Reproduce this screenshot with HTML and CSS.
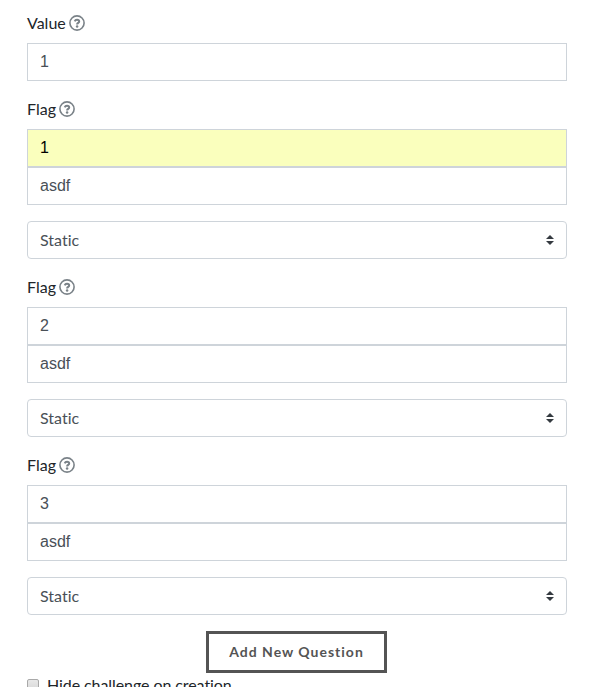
FILE: index.html
```html
<!DOCTYPE html>
<html lang="en"><head><meta charset="utf-8"><title>Challenge</title><link rel="stylesheet" href="styles.css"></head>
<body>
<svg class="defs"><symbol id="help" viewBox="0 0 16 16"><circle cx="8" cy="8" r="7.100" fill="none" stroke="currentColor" stroke-width="1.600"/><path d="M5.700 6.300C6.100 5.200 6.900 4.700 8 4.700c1.300 0 2.200.700 2.200 1.700 0 1.500-2.100 1.400-2.100 3" fill="none" stroke="currentColor" stroke-width="2"/><circle cx="8.100" cy="11.500" r="1.250" fill="currentColor"/></symbol>
<symbol id="caret" viewBox="0 0 8 10"><path d="M4 0L8 4H0zM0 6h8L4 10z" fill="currentColor"/></symbol></svg>
<form class="form">
<div class="group"><label class="label">Value <svg class="help"><use href="#help"/></svg></label><div class="field arial">1</div></div>
<div class="group"><label class="label">Flag <svg class="help"><use href="#help"/></svg></label><div class="field arial filled">1</div><div class="field arial">asdf</div></div>
<div class="select">Static<svg class="caret"><use href="#caret"/></svg></div>
<div class="group"><label class="label">Flag <svg class="help"><use href="#help"/></svg></label><div class="field arial">2</div><div class="field arial">asdf</div></div>
<div class="select">Static<svg class="caret"><use href="#caret"/></svg></div>
<div class="group"><label class="label">Flag <svg class="help"><use href="#help"/></svg></label><div class="field arial">3</div><div class="field arial">asdf</div></div>
<div class="select">Static<svg class="caret"><use href="#caret"/></svg></div>
<button type="button" class="add">Add New Question</button>
<label class="check"><span class="box"></span><span class="check-text">Hide challenge on creation</span></label>
</form>
</body></html>
```
FILE: styles.css
```css
* { box-sizing: border-box; }
body { margin: 0; height: 687px; overflow: hidden; background: #fff; color: #212529; font: 16px/24px Lato, sans-serif; font-variant-ligatures: none; }
.defs { display: none; }
.form { padding: 11px 23px 0 27px; display: flex; flex-direction: column; }
.group { margin-bottom: 16px; }
.label { display: flex; align-items: center; gap: 3px; height: 24px; margin-bottom: 8px; }
.help { width: 16px; height: 16px; color: #7a8288; }
.field, .select { height: 38px; border: 1px solid #ced4da; padding: 6px 12px; color: #495057; }
.arial { font-family: "Liberation Sans", Arial, sans-serif; }
.filled { background: #faffbd; color: #000; }
.select { display: flex; align-items: center; justify-content: space-between; border-radius: 4px; margin-bottom: 16px; }
.caret { width: 8px; height: 10px; color: #343a40; }
.add { align-self: center; width: 181px; height: 42px; margin-right: 1px; border: 3px solid #545454; background: #fff; color: #545454; font: bold 14px/20px Lato, sans-serif; letter-spacing: 1px; padding: 0; }
.check { display: flex; align-items: center; gap: 8px; }
.check-text { letter-spacing: -0.08px; }
.box { width: 12px; height: 12px; border: 1px solid #a9a9a9; border-radius: 2px; background: linear-gradient(#e8e8e8, #d8d8d8); }
```
